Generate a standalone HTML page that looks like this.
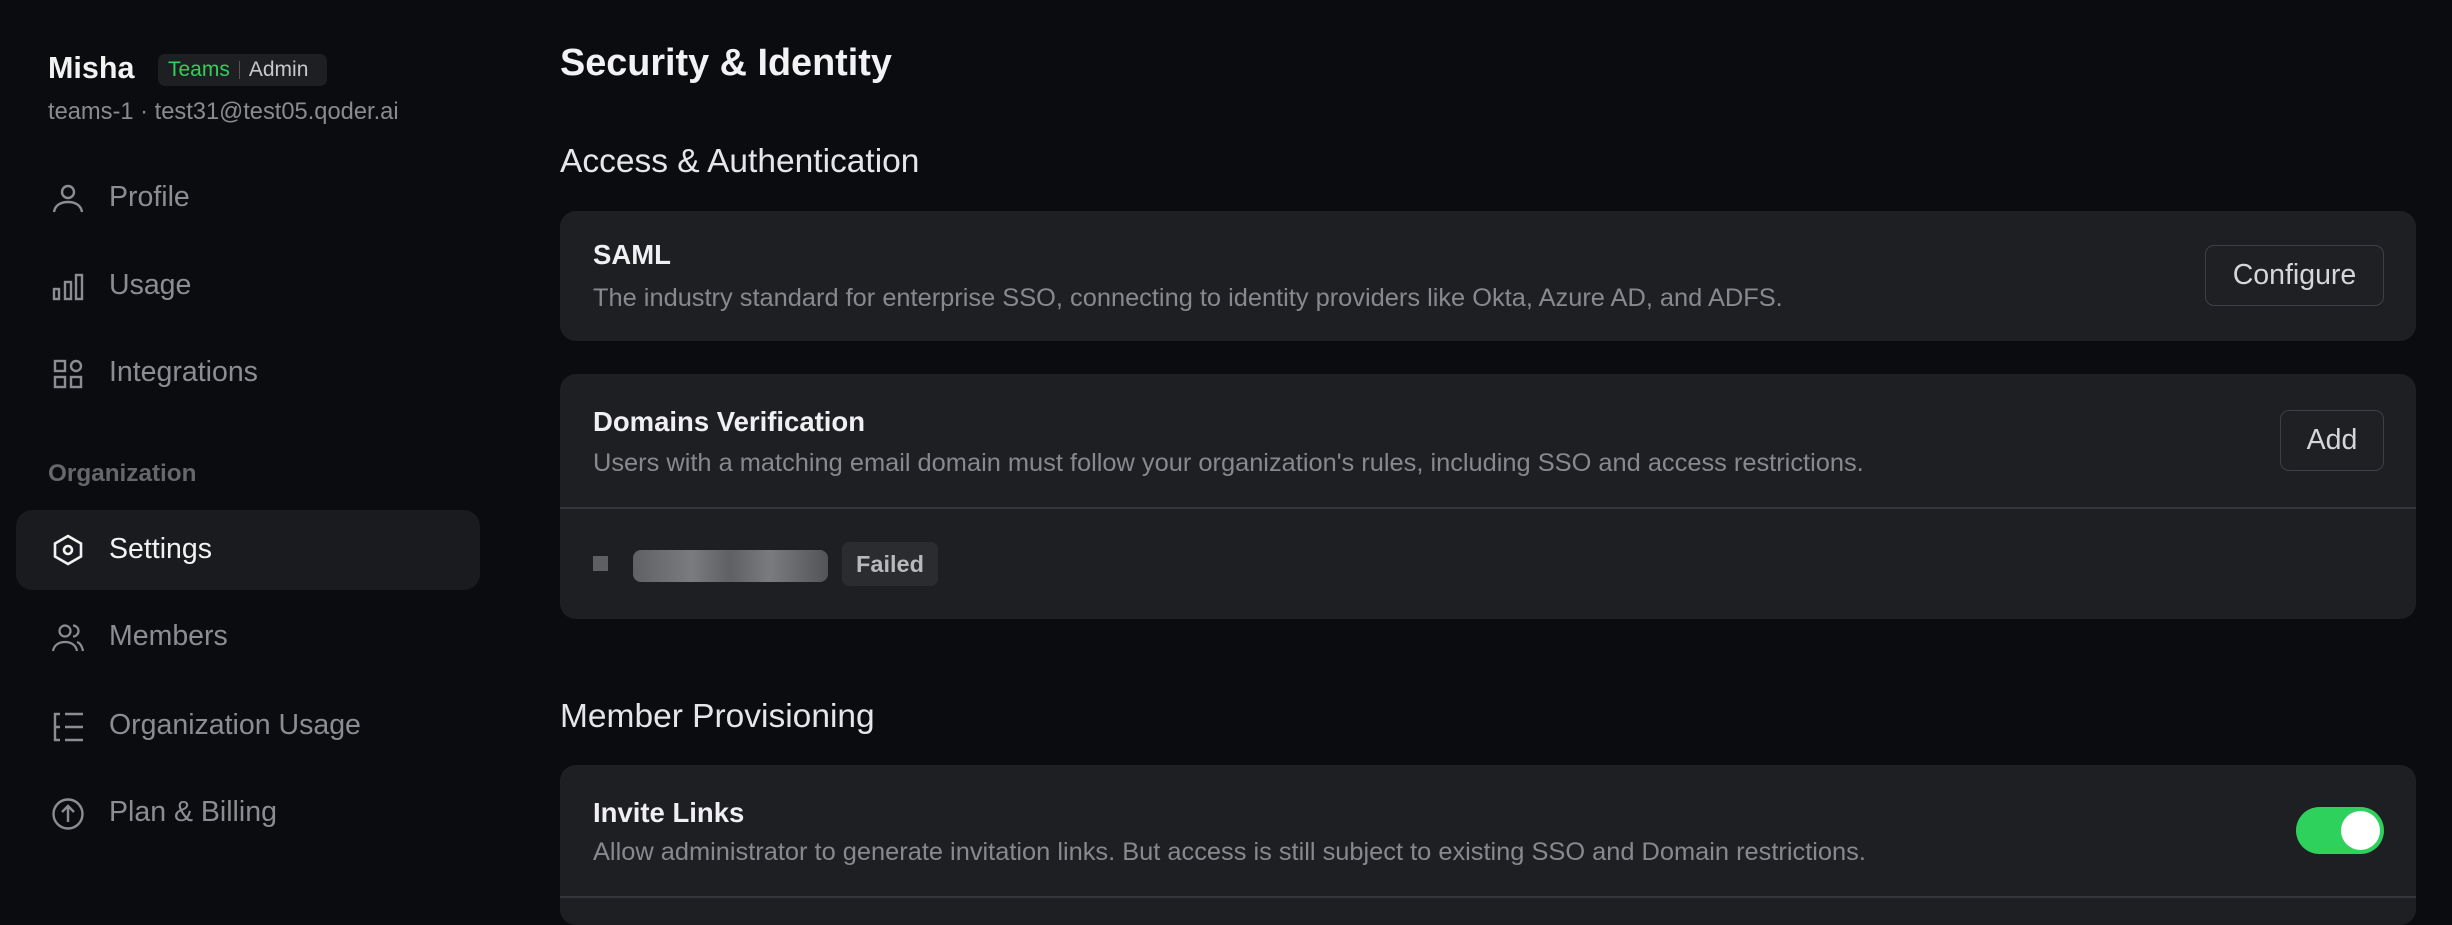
<!DOCTYPE html>
<html><head><meta charset="utf-8"><style>
*{box-sizing:border-box;margin:0;padding:0}
body{width:2452px;height:902px;overflow:hidden;background:#0b0c0f;font-family:"Liberation Sans",sans-serif;position:relative;color:#e8e8ea}
.a{position:absolute;white-space:nowrap}
.nav{color:#8c8d92;font-size:28.5px}
.ic{position:absolute;width:34px;height:34px}
.card{position:absolute;left:560px;width:1856px;background:#1e1f22;border-radius:16px}
.ct{font-size:27.5px;font-weight:bold;color:#f0f0f2}
.cd{font-size:25.4px;color:#88898e}
.btn{position:absolute;border:1.5px solid #3d4047;border-radius:9px;color:#d6d6d8;font-size:28.5px;display:flex;align-items:center;justify-content:center;background:#1f2023}
</style></head><body>
<div class="a" style="left:48px;top:51px;font-size:30.5px;font-weight:bold;color:#f2f2f2">Misha</div>
<div class="a" style="left:158px;top:54px;width:169px;height:32px;background:#1e1f22;border-radius:7px;font-size:21px;line-height:32px;padding-left:10px"><span style="color:#2fd15a">Teams</span><span style="display:inline-block;width:1px;height:18px;background:#555;margin:0 9px;vertical-align:-3px"></span><span style="color:#c8c8ca">Admin</span></div>
<div class="a" style="left:48px;top:99px;font-size:23.7px;color:#8a8b8f">teams-1 · test31@test05.qoder.ai</div>

<svg class="ic" style="left:51px;top:181px" viewBox="0 0 34 34" fill="none" stroke="#8c8d92" stroke-width="2.4"><circle cx="17" cy="11" r="6"/><path d="M3 31c1-7 7-10 14-10s13 3 14 10"/></svg>
<div class="a nav" style="left:109px;top:181px">Profile</div>
<svg class="ic" style="left:51px;top:270px" viewBox="0 0 34 34" fill="none" stroke="#8c8d92" stroke-width="2.4"><rect x="3" y="19" width="5" height="10"/><rect x="14" y="12" width="6" height="17"/><rect x="25" y="5" width="6" height="24"/></svg>
<div class="a nav" style="left:109px;top:269px">Usage</div>
<svg class="ic" style="left:51px;top:357px" viewBox="0 0 34 34" fill="none" stroke="#8c8d92" stroke-width="2.4"><rect x="4" y="4" width="10" height="10"/><circle cx="25" cy="9" r="5"/><rect x="4" y="20" width="10" height="10"/><rect x="20" y="20" width="10" height="10"/></svg>
<div class="a nav" style="left:109px;top:356px">Integrations</div>

<div class="a" style="left:48px;top:460px;font-size:24.3px;font-weight:bold;color:#66676b">Organization</div>
<div class="a" style="left:16px;top:510px;width:464px;height:80px;background:#1a1b1e;border-radius:16px"></div>
<svg class="ic" style="left:51px;top:533px" viewBox="0 0 34 34" fill="none" stroke="#f2f2f2" stroke-width="2.6"><path d="M17 3l13 7.5v13L17 31 4 23.5v-13z"/><circle cx="17" cy="17" r="4"/></svg>
<div class="a" style="left:109px;top:533px;font-size:28.5px;color:#f2f2f2">Settings</div>
<svg class="ic" style="left:51px;top:621px" viewBox="0 0 34 34" fill="none" stroke="#8c8d92" stroke-width="2.2"><circle cx="14" cy="10" r="5.5"/><path d="M2 30c1-6 6-9 12-9s11 3 12 9"/><path d="M22 4.5a5.5 5.5 0 010 11M26 21c3 1 5 4 6 9"/></svg>
<div class="a nav" style="left:109px;top:620px">Members</div>
<svg class="ic" style="left:51px;top:710px" viewBox="0 0 34 34" fill="none" stroke="#8c8d92" stroke-width="2.4"><path d="M9 4H4v26h5M4 17h5M14 4h18M14 17h18M14 30h18"/></svg>
<div class="a nav" style="left:109px;top:709px">Organization Usage</div>
<svg class="ic" style="left:51px;top:797px" viewBox="0 0 34 34" fill="none" stroke="#8c8d92" stroke-width="2.4"><circle cx="17" cy="17" r="14.5"/><path d="M17 25V10M11 15l6-6 6 6"/></svg>
<div class="a nav" style="left:109px;top:796px">Plan &amp; Billing</div>

<div class="a" style="left:560px;top:42px;font-size:37.8px;font-weight:bold;color:#f2f2f4">Security &amp; Identity</div>
<div class="a" style="left:560px;top:143px;font-size:33.5px;color:#e6e6e8">Access &amp; Authentication</div>

<div class="card" style="top:211px;height:130px">
<div class="a ct" style="left:33px;top:28px">SAML</div>
<div class="a cd" style="left:33px;top:73px">The industry standard for enterprise SSO, connecting to identity providers like Okta, Azure AD, and ADFS.</div>
<div class="btn" style="left:1645px;top:34px;width:179px;height:61px">Configure</div>
</div>

<div class="card" style="top:374px;height:245px">
<div class="a ct" style="left:33px;top:32px">Domains Verification</div>
<div class="a cd" style="left:33px;top:75px">Users with a matching email domain must follow your organization's rules, including SSO and access restrictions.</div>
<div class="btn" style="left:1720px;top:36px;width:104px;height:61px">Add</div>
<div class="a" style="left:0;top:133px;width:1856px;height:1.5px;background:#33373d"></div>
<div class="a" style="left:33px;top:182px;width:15px;height:15px;background:#5e5f63"></div>
<div class="a" style="left:73px;top:176px;width:195px;height:32px;border-radius:8px;background:linear-gradient(90deg,#606165,#7a7b7f 30%,#5f6064 50%,#7a7b7f 70%,#535458)"></div>
<div class="a" style="left:282px;top:168px;width:96px;height:44px;border-radius:7px;background:#2b2c30;color:#b8b9bc;font-size:23.5px;font-weight:bold;line-height:44px;text-align:center">Failed</div>
</div>

<div class="a" style="left:560px;top:698px;font-size:33.5px;color:#e6e6e8">Member Provisioning</div>
<div class="card" style="top:765px;height:160px">
<div class="a ct" style="left:33px;top:32px">Invite Links</div>
<div class="a cd" style="left:33px;top:73px">Allow administrator to generate invitation links. But access is still subject to existing SSO and Domain restrictions.</div>
<div class="a" style="left:1736px;top:42px;width:88px;height:47px;border-radius:24px;background:#2fd15d"><div style="position:absolute;right:4px;top:4px;width:39px;height:39px;border-radius:50%;background:#fff"></div></div>
<div class="a" style="left:0;top:131px;width:1856px;height:1.5px;background:#33373d"></div>
</div>
</body></html>
